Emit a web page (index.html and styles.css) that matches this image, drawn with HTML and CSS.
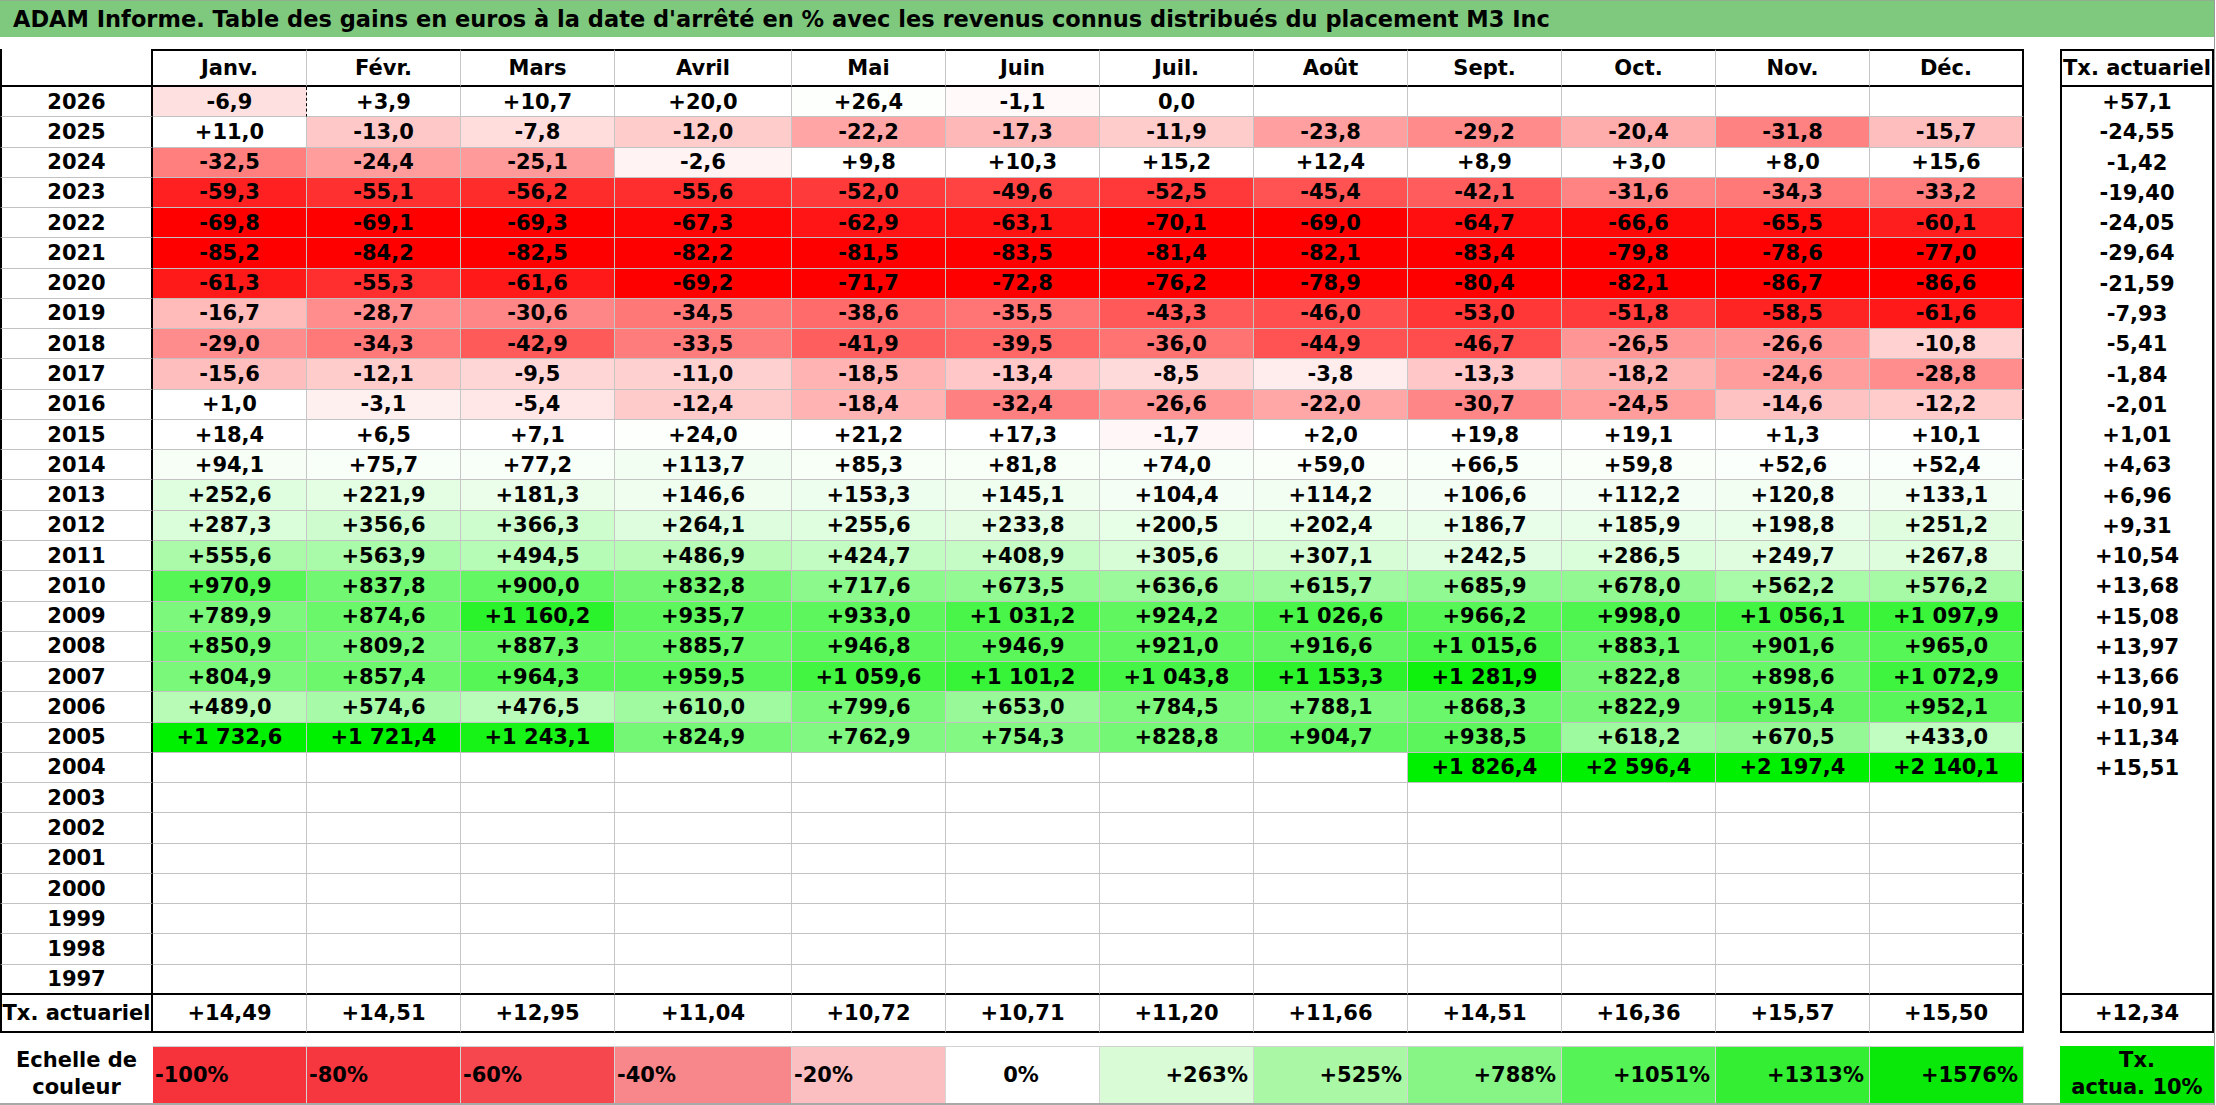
FILE: index.html
```html
<!DOCTYPE html>
<html lang="fr">
<head>
<meta charset="utf-8">
<title>ADAM Informe</title>
<link rel="stylesheet" href="styles.css">
</head>
<body>
<div class="sheet">
  <div class="title">ADAM Informe. Table des gains en euros à la date d'arrêté en % avec les revenus connus distribués du placement M3 Inc</div>
  <div class="board">
    <div class="main" id="main"></div>
    <div class="tx" id="tx"></div>
  </div>
  <div class="legend">
    <div class="lg-label">Echelle de<br>couleur</div>
    <div class="lg neg l1">-100%</div>
    <div class="lg neg l2">-80%</div>
    <div class="lg neg l3">-60%</div>
    <div class="lg neg l4">-40%</div>
    <div class="lg neg l5">-20%</div>
    <div class="lg zero l6">0%</div>
    <div class="lg pos l7">+263%</div>
    <div class="lg pos l8">+525%</div>
    <div class="lg pos l9">+788%</div>
    <div class="lg pos l10">+1051%</div>
    <div class="lg pos l11">+1313%</div>
    <div class="lg pos l12">+1576%</div>
    <div class="lg-gap"></div>
    <div class="lg-tx">Tx.<br>actua. 10%</div>
  </div>
</div>
<script src="script.js"></script>
</body>
</html>
```

FILE: styles.css
```css
html, body {
  margin: 0;
  padding: 0;
  background: #ffffff;
}

body {
  font-family: "DejaVu Sans", "Liberation Sans", sans-serif;
  font-weight: 700;
  font-size: 21px;
  color: #000000;
}

.sheet {
  width: 2215px;
  height: 1105px;
  box-sizing: border-box;
  border-right: 1px solid #9a9a9a;
  overflow: hidden;
}

.title {
  height: 37px;
  box-sizing: border-box;
  border-top: 1px solid #8fb08f;
  background: #7fc97f;
  padding-left: 13px;
  display: flex;
  align-items: center;
  font-size: 22.5px;
  white-space: nowrap;
}

.board {
  display: flex;
  gap: 36px;
  margin-top: 12px;
}

.main {
  display: grid;
  grid-template-columns: 153px repeat(3, 154px) 177px repeat(8, 154px);
  grid-template-rows: 38px repeat(30, 30.2667px) 38px;
}

.tx {
  display: grid;
  grid-template-columns: 154px;
  grid-template-rows: 38px repeat(30, 30.2667px) 38px;
}

.main > div,
.tx > div {
  box-sizing: border-box;
  display: flex;
  align-items: center;
  justify-content: center;
  white-space: nowrap;
}

.corner {
  border-left: 2px solid #000;
  border-right: 2px solid #000;
  border-bottom: 2px solid #000;
}

.mh {
  border-top: 2px solid #000;
  border-bottom: 2px solid #000;
  border-right: 1px solid #c6c6c6;
}

.mh.last {
  border-right: 2px solid #000;
}

.yr {
  border-left: 2px solid #000;
  border-right: 2px solid #000;
  border-bottom: 1px solid #c2c2c2;
}

.c {
  border-right: 1px solid #c6c6c6;
  border-bottom: 1px solid #c2c2c2;
}

.c.last {
  border-right: 2px solid #000;
}

.c.dash {
  border-right: 1px dashed #000;
}

.yr.end,
.c.end {
  border-bottom: 2px solid #000;
}

.yr.txr,
.c.txr {
  border-bottom: 2px solid #000;
}

.th {
  border: 2px solid #000;
}

.tv {
  border-left: 2px solid #000;
  border-right: 2px solid #000;
}

.tv.end,
.tv.txr {
  border-bottom: 2px solid #000;
}

.legend {
  display: grid;
  grid-template-columns: 153px repeat(3, 154px) 177px repeat(8, 154px) 36px 154px;
  height: 59px;
  box-sizing: border-box;
  margin-top: 13px;
  border-bottom: 2px solid #a8a8a8;
}

.lg-label {
  display: flex;
  align-items: center;
  justify-content: center;
  text-align: center;
  line-height: 27px;
}

.lg {
  box-sizing: border-box;
  border-top: 1px solid #d0d0d0;
  border-right: 1px solid #d4d4d4;
  display: flex;
  align-items: center;
  padding: 0 5px 0 2px;
  white-space: nowrap;
}

.neg { justify-content: flex-start; }
.zero { justify-content: center; }
.pos { justify-content: flex-end; }

.l1 { background: #f6333b; }
.l2 { background: #f6373f; }
.l3 { background: #f6474e; }
.l4 { background: #f8878b; }
.l5 { background: #fbbfc1; }
.l6 { background: #ffffff; }
.l7 { background: #d9fcd6; }
.l8 { background: #aaf8a6; }
.l9 { background: #86f586; }
.l10 { background: #55f355; }
.l11 { background: #33ee33; }
.l12 { background: #0ae80a; }

.lg-tx {
  background: #00e600;
  display: flex;
  align-items: center;
  justify-content: center;
  text-align: center;
  line-height: 27px;
}
```

FILE: script.js
```js
(function () {
  var months = ["Janv.", "Févr.", "Mars", "Avril", "Mai", "Juin", "Juil.", "Août", "Sept.", "Oct.", "Nov.", "Déc."];

  var data = [
    [2026, "-6,9;+3,9;+10,7;+20,0;+26,4;-1,1;0,0;;;;;"],
    [2025, "+11,0;-13,0;-7,8;-12,0;-22,2;-17,3;-11,9;-23,8;-29,2;-20,4;-31,8;-15,7"],
    [2024, "-32,5;-24,4;-25,1;-2,6;+9,8;+10,3;+15,2;+12,4;+8,9;+3,0;+8,0;+15,6"],
    [2023, "-59,3;-55,1;-56,2;-55,6;-52,0;-49,6;-52,5;-45,4;-42,1;-31,6;-34,3;-33,2"],
    [2022, "-69,8;-69,1;-69,3;-67,3;-62,9;-63,1;-70,1;-69,0;-64,7;-66,6;-65,5;-60,1"],
    [2021, "-85,2;-84,2;-82,5;-82,2;-81,5;-83,5;-81,4;-82,1;-83,4;-79,8;-78,6;-77,0"],
    [2020, "-61,3;-55,3;-61,6;-69,2;-71,7;-72,8;-76,2;-78,9;-80,4;-82,1;-86,7;-86,6"],
    [2019, "-16,7;-28,7;-30,6;-34,5;-38,6;-35,5;-43,3;-46,0;-53,0;-51,8;-58,5;-61,6"],
    [2018, "-29,0;-34,3;-42,9;-33,5;-41,9;-39,5;-36,0;-44,9;-46,7;-26,5;-26,6;-10,8"],
    [2017, "-15,6;-12,1;-9,5;-11,0;-18,5;-13,4;-8,5;-3,8;-13,3;-18,2;-24,6;-28,8"],
    [2016, "+1,0;-3,1;-5,4;-12,4;-18,4;-32,4;-26,6;-22,0;-30,7;-24,5;-14,6;-12,2"],
    [2015, "+18,4;+6,5;+7,1;+24,0;+21,2;+17,3;-1,7;+2,0;+19,8;+19,1;+1,3;+10,1"],
    [2014, "+94,1;+75,7;+77,2;+113,7;+85,3;+81,8;+74,0;+59,0;+66,5;+59,8;+52,6;+52,4"],
    [2013, "+252,6;+221,9;+181,3;+146,6;+153,3;+145,1;+104,4;+114,2;+106,6;+112,2;+120,8;+133,1"],
    [2012, "+287,3;+356,6;+366,3;+264,1;+255,6;+233,8;+200,5;+202,4;+186,7;+185,9;+198,8;+251,2"],
    [2011, "+555,6;+563,9;+494,5;+486,9;+424,7;+408,9;+305,6;+307,1;+242,5;+286,5;+249,7;+267,8"],
    [2010, "+970,9;+837,8;+900,0;+832,8;+717,6;+673,5;+636,6;+615,7;+685,9;+678,0;+562,2;+576,2"],
    [2009, "+789,9;+874,6;+1 160,2;+935,7;+933,0;+1 031,2;+924,2;+1 026,6;+966,2;+998,0;+1 056,1;+1 097,9"],
    [2008, "+850,9;+809,2;+887,3;+885,7;+946,8;+946,9;+921,0;+916,6;+1 015,6;+883,1;+901,6;+965,0"],
    [2007, "+804,9;+857,4;+964,3;+959,5;+1 059,6;+1 101,2;+1 043,8;+1 153,3;+1 281,9;+822,8;+898,6;+1 072,9"],
    [2006, "+489,0;+574,6;+476,5;+610,0;+799,6;+653,0;+784,5;+788,1;+868,3;+822,9;+915,4;+952,1"],
    [2005, "+1 732,6;+1 721,4;+1 243,1;+824,9;+762,9;+754,3;+828,8;+904,7;+938,5;+618,2;+670,5;+433,0"],
    [2004, ";;;;;;;;+1 826,4;+2 596,4;+2 197,4;+2 140,1"],
    [2003, ""],
    [2002, ""],
    [2001, ""],
    [2000, ""],
    [1999, ""],
    [1998, ""],
    [1997, ""]
  ];

  var txRow = ["+57,1", "-24,55", "-1,42", "-19,40", "-24,05", "-29,64", "-21,59", "-7,93", "-5,41", "-1,84", "-2,01",
    "+1,01", "+4,63", "+6,96", "+9,31", "+10,54", "+13,68", "+15,08", "+13,97", "+13,66", "+10,91", "+11,34", "+15,51",
    "", "", "", "", "", "", ""];

  var totals = ["+14,49", "+14,51", "+12,95", "+11,04", "+10,72", "+10,71", "+11,20", "+11,66", "+14,51", "+16,36", "+15,57", "+15,50"];

  function num(s) {
    return parseFloat(s.replace(/\s/g, "").replace(",", "."));
  }

  function bg(v) {
    var t, k, g;
    if (v < 0) {
      t = Math.min(1, Math.pow(-v / 69, 0.92));
      k = Math.round(255 * (1 - t));
      return "rgb(255," + k + "," + k + ")";
    }
    t = Math.min(1, Math.pow(v / 1343, 1.25));
    k = Math.round(255 * (1 - t));
    g = Math.round(255 - 14 * t);
    return "rgb(" + k + "," + g + "," + k + ")";
  }

  function cell(parent, cls, text, color) {
    var d = document.createElement("div");
    d.className = cls;
    d.textContent = text;
    if (color) d.style.background = color;
    parent.appendChild(d);
  }

  var main = document.getElementById("main");
  var tx = document.getElementById("tx");

  cell(main, "corner", "");
  months.forEach(function (m, i) {
    cell(main, "mh" + (i === 11 ? " last" : ""), m);
  });

  data.forEach(function (r, ri) {
    var end = ri === data.length - 1 ? " end" : "";
    cell(main, "yr" + end, String(r[0]));
    var vals = r[1] === "" ? [] : r[1].split(";");
    while (vals.length < 12) vals.push("");
    vals.forEach(function (s, i) {
      var cls = "c" + (i === 11 ? " last" : "") + end;
      if (ri === 0 && i === 0) cls += " dash";
      cell(main, cls, s, s ? bg(num(s)) : null);
    });
  });

  cell(main, "yr txr", "Tx. actuariel");
  totals.forEach(function (s, i) {
    cell(main, "c txr" + (i === 11 ? " last" : ""), s);
  });

  cell(tx, "th", "Tx. actuariel");
  txRow.forEach(function (s, ri) {
    cell(tx, "tv" + (ri === txRow.length - 1 ? " end" : ""), s);
  });
  cell(tx, "tv txr", "+12,34");
})();
```
